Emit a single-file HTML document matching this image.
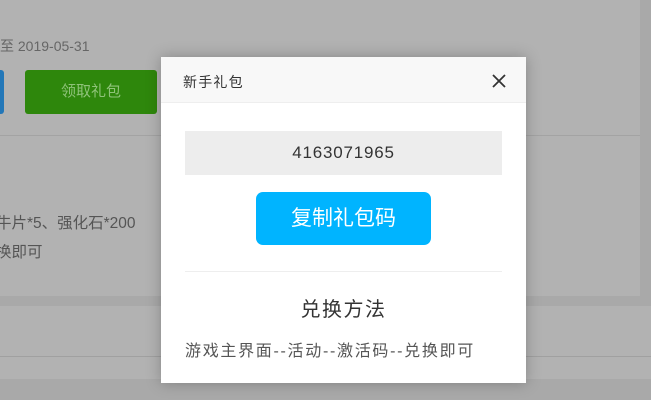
<!DOCTYPE html>
<html><head><meta charset="utf-8"><style>
*{margin:0;padding:0;box-sizing:border-box}
body{width:651px;height:400px;overflow:hidden;background:#a9a9a9;font-family:"Liberation Sans","Noto Sans CJK SC",sans-serif;position:relative}
.a{position:absolute}
</style></head><body>
<div class="a" style="left:0;top:0;width:640px;height:296px;background:#b2b2b2"></div>
<div class="a" style="left:0;top:36px;font-size:14px;color:#666">至 2019-05-31</div>
<div class="a" style="left:0;top:70px;width:4px;height:44px;background:#2377b8;border-radius:0 3px 3px 0"></div>
<div class="a" style="left:25px;top:70px;width:132px;height:44px;background:#2e870c;border-radius:3px;color:#8fc37a;font-size:15px;text-align:center;line-height:44px">领取礼包</div>
<div class="a" style="left:0;top:135px;width:640px;height:1px;background:#a3a3a3"></div>
<div class="a" style="left:-4px;top:211px;font-size:15.5px;color:#555">牛片*5、强化石*200</div>
<div class="a" style="left:-4px;top:240px;font-size:15.5px;color:#555">换即可</div>
<div class="a" style="left:0;top:306px;width:651px;height:50px;background:#b2b2b2"></div>
<div class="a" style="left:0;top:356px;width:651px;height:1px;background:#a0a0a0"></div>
<div class="a" style="left:0;top:357px;width:651px;height:22px;background:#b2b2b2"></div>
<div class="a" style="left:161px;top:57px;width:365px;height:326px;background:#fff;box-shadow:0 0 14px rgba(0,0,0,.25)">
 <div class="a" style="left:0;top:0;width:365px;height:46px;background:#f8f8f8;border-bottom:1px solid #eee"></div>
 <div class="a" style="left:22px;top:15px;font-size:14px;letter-spacing:1.2px;color:#333">新手礼包</div>
 <svg class="a" style="left:331px;top:17px" width="14" height="14" viewBox="0 0 14 14"><path d="M1 1L13 13M13 1L1 13" stroke="#333" stroke-width="1.8"/></svg>
 <div class="a" style="left:24px;top:74px;width:317px;height:44px;background:#ededed;text-align:center;line-height:44px;font-size:17px;letter-spacing:0.8px;color:#333">4163071965</div>
 <div class="a" style="left:95px;top:135px;width:175px;height:53px;background:#00b4ff;border-radius:7px;text-align:center;line-height:53px;font-size:21px;color:#fff">复制礼包码</div>
 <div class="a" style="left:24px;top:214px;width:317px;height:1px;background:#eee"></div>
 <div class="a" style="left:0;top:236px;width:365px;text-align:center;font-size:20px;letter-spacing:1.5px;color:#333">兑换方法</div>
 <div class="a" style="left:24px;top:280px;font-size:16px;letter-spacing:1.7px;color:#555;white-space:nowrap">游戏主界面--活动--激活码--兑换即可</div>
</div>
</body></html>
